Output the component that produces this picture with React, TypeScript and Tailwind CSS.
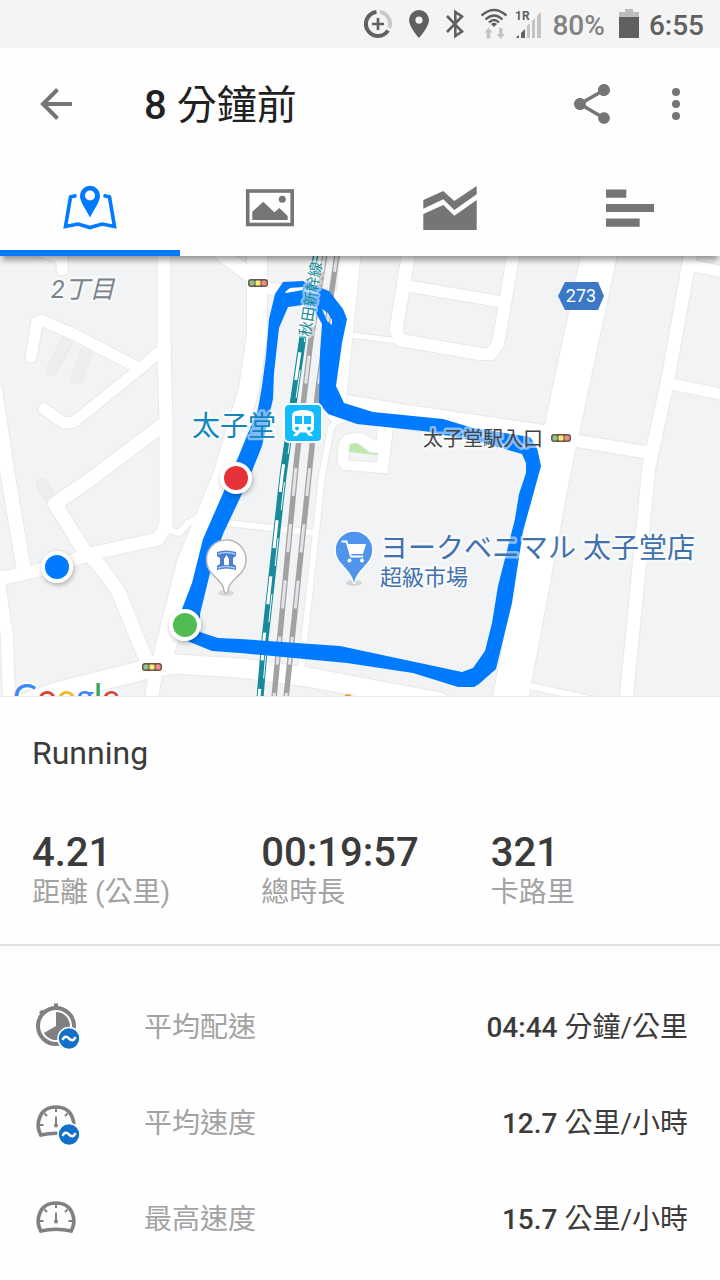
import React, { useState } from 'react';

type Road = { d: string; w: number };

const roads: Road[] = [
  { d: 'M164 -5 L164 92 L166 165 L166 270 L158 283 L90 298 L57 310 L-5 324', w: 13 },
  { d: 'M170 274 L179 277 L188 267 L200 261', w: 6 },
  { d: 'M164 168 L95 220 L55 248 L83 293 L100 310 L118 335 L148 408', w: 14 },
  { d: 'M31 101 L37 66 L41 64 L73 78 L137 111', w: 11 },
  { d: 'M44 153 L64 167 L74 166 L142 111 L166 90', w: 11 },
  { d: 'M-5 134 L8 220 L24 315', w: 14 },
  { d: 'M-2 320 L7 380 L9 450', w: 12 },
  { d: 'M20 449 L60 435 L148 413 L174 408 L240 412 L307 421 L440 446', w: 19 },
  { d: 'M156 415 L151 445', w: 13 },
  { d: 'M62 14 L62 2 L30 -8', w: 11 },
  { d: 'M214 -8 L256 24', w: 14 },
  { d: 'M257 -5 L257 80 L249 133 L223 220 L187 307 L161 410', w: 20 },
  { d: 'M257 31 L345 42', w: 12 },
  { d: 'M351 -5 L335 155', w: 20 },
  { d: 'M345 163 L335 166 L331 172 L322 220 L301 415', w: 6 },
  { d: 'M340 150 L400 160 L550 182', w: 24 },
  { d: 'M560 182 L650 197', w: 12 },
  { d: 'M600 -5 L563 168 L552 220 L510 445', w: 35 },
  { d: 'M691 -5 L667 128 L649 210 L626 445', w: 13 },
  { d: 'M688 9 L725 16', w: 11 },
  { d: 'M667 127 L725 139', w: 11 },
  { d: 'M525 429 L600 445', w: 6 },
  { d: 'M409 -5 L396 74', w: 13 },
  { d: 'M408 30 L502 46', w: 11 },
  { d: 'M514 -5 L498 88 L491 98 L480 98 L400 84 L396 74', w: 12 },
  { d: 'M350 79 L398 85', w: 5 },
  { d: 'M228 267 L316 277', w: 6 },
];

const alleys = ['M68 83 L52 114', 'M88 92 L77 122', 'M42 229 L52 244'];

const routeShape =
  'M182 353 L192 327 L203 283 L224 235 L242 192 L258 153 L262 130 L266 100 L269 63 L275 38 L283 26 L303 25 L329 35 L343 53 L347 63 L342 87 L336 130 L344 147 L373 156 L443 163 L473 172 L530 181 L537 192 L541 210 L530 250 L523 275 L512 347 L496 413 L479 428 L474 431 L458 431 L413 417 L347 407 L240 397 L212 395 L180 382Z ' +
  'M200 358 L210 317 L223 278 L240 242 L252 215 L262 190 L273 143 L274 117 L279 72 L288 51 L303 49 L315 55 L322 68 L320 97 L319 147 L328 158 L357 168 L423 175 L480 186 L522 198 L526 207 L526 217 L519 238 L515 263 L498 330 L492 367 L485 395 L473 412 L462 416 L415 406 L340 390 L240 383 L218 382 L200 376Z ' +
  'M285 36 L290 32 L303 31 L303 34 L286 37Z M322 53 L328 57 L332 64 L332 69 L327 65Z';

const stats = [
  { value: '4.21', label: '距離 (公里)' },
  { value: '00:19:57', label: '總時長' },
  { value: '321', label: '卡路里' },
];

const details = [
  { icon: 'pace', average: true, label: '平均配速', value: '04:44', unit: '分鐘/公里' },
  { icon: 'gauge', average: true, label: '平均速度', value: '12.7', unit: '公里/小時' },
  { icon: 'gauge', average: false, label: '最高速度', value: '15.7', unit: '公里/小時' },
];

const tabs = [
  {
    label: '地圖',
    icon: (
      <>
        <path d="M16.5 11.5 L10.5 13 L5.5 42.5 L18 40 L30 43.5 L42 40 L54.5 42.5 L49.5 13 L43.5 11.5" fill="none" stroke="currentColor" strokeWidth="3.6" />
        <path fillRule="evenodd" d="M30 1.7 A10 10 0 0 0 20 11.7 C20 18 25.5 24.5 30 33.5 C34.5 24.5 40 18 40 11.7 A10 10 0 0 0 30 1.7Z M30 6.5 A5 5 0 1 1 30 16.5 A5 5 0 1 1 30 6.5Z" fill="currentColor" />
      </>
    ),
  },
  {
    label: '相片',
    icon: (
      <>
        <rect x="7.7" y="7" width="44.5" height="33.5" fill="none" stroke="currentColor" strokeWidth="3.6" />
        <circle cx="42.3" cy="15.3" r="3.5" fill="currentColor" />
        <path d="M12.3 27.7 L23.3 17.7 L34.3 28.3 L39.3 24 L47.7 32 V36 H12.3Z" fill="currentColor" />
      </>
    ),
  },
  {
    label: '圖表',
    icon: (
      <path d="M3.3 16 L23.3 7 L34.3 17 L56.7 2 V10.3 L34.3 26 L23.3 15.3 L3.3 24.7Z M3.3 30 L23.3 21 L34.3 31.7 L56.7 16 V46 H3.3Z" fill="currentColor" />
    ),
  },
  {
    label: '分段',
    icon: <path d="M6 5.5 H26.3 V13.7 H6Z M6 20 H54 V28 H6Z M6 34.5 H39.7 V42.7 H6Z" fill="currentColor" />,
  },
];

const StatusBar: React.FC = () => (
  <div className="flex h-12 items-center justify-end bg-[#f4f4f4] pr-4 text-[28px] leading-8 text-[#606060]">
    <div className="flex items-center gap-[17px]">
      <svg width="28" height="30" viewBox="0 0 28 30" fill="none" strokeWidth="4">
        <path d="M12.5 3 A12 12 0 1 0 24 21.5" stroke="#606060" />
        <path d="M16 3 A12 12 0 0 1 25.3 19" stroke="#c9c9c9" />
        <path d="M14 9 V21 M8 15 H20" stroke="#606060" strokeWidth="2.6" />
      </svg>
      <svg width="20" height="30" viewBox="0 0 20 30" fill="currentColor">
        <path fillRule="evenodd" d="M10 1 A10 10 0 0 0 0 11 C0 18 10 29 10 29 C10 29 20 18 20 11 A10 10 0 0 0 10 1Z M10 7.5 A3.6 3.6 0 1 1 10 14.7 A3.6 3.6 0 1 1 10 7.5Z" />
      </svg>
      <svg width="18" height="30" viewBox="0 0 18 30" fill="none" stroke="currentColor" strokeWidth="2.6">
        <path d="M1 7 L16 22.5 L9.3 27 V3 L16 7.5 L1 23" />
      </svg>
    </div>
    <svg className="ml-[17px]" width="26" height="32" viewBox="0 0 26 32">
      <g fill="none" stroke="#606060" strokeWidth="2.4">
        <path d="M0.5 7.5 Q13 -3.5 25.5 7.5" />
        <path d="M4.5 11.5 Q13 3.5 21.5 11.5" />
        <path d="M8 14.5 Q13 9.5 18 14.5" />
      </g>
      <path d="M10 16 Q13 13.500 16 16 L13 19Z" fill="#606060" />
      <path d="M7.5 19.5 L11.5 24.5 H9.3 V30.5 H5.7 V24.5 H3.5Z M18 20 H21.5 V26 H24 L19.7 31 L15.5 26 H18Z" fill="#c4c4c4" />
    </svg>
    <svg className="ml-2" width="27" height="30" viewBox="0 0 27 30">
      <path d="M1 29 V28.5 L4 26 V29Z M6 29 V24 L10 20 V29Z" fill="#606060" />
      <path d="M12 29 V17 L15 14 V29Z M17 29 V12 L20 9 V29Z M22 29 V7 L26 3 V29Z" fill="#c4c4c4" />
      <text x="0" y="11" fontSize="12" fontWeight="700" fill="#606060">1R</text>
    </svg>
    <span className="ml-[10px] pt-1 font-medium text-[#828282]">80%</span>
    <svg className="ml-[14px]" width="20" height="30" viewBox="0 0 20 30">
      <path d="M6 0 H14 V3 H20 V29 H0 V3 H6Z" fill="#bdbdbd" />
      <path d="M0 8 H20 V29 H0Z" fill="#606060" />
    </svg>
    <span className="ml-[10px] pt-1 font-medium">6:55</span>
  </div>
);

const TrafficLight: React.FC<{ x: number; y: number }> = ({ x, y }) => (
  <g transform={`translate(${x} ${y})`}>
    <rect width="20" height="8" rx="3" fill="#6a5844" />
    <rect x="1.5" y="1.5" width="5" height="5" rx="1.5" fill="#8cc38f" />
    <rect x="7.5" y="1.5" width="5" height="5" rx="1" fill="#fbe974" />
    <rect x="13.5" y="1.5" width="5" height="5" rx="1.5" fill="#f08d89" />
  </g>
);

const Marker: React.FC<{ x: number; y: number; color: string }> = ({ x, y, color }) => (
  <g>
    <circle cx={x} cy={y} r="16" fill="#fff" filter="url(#marker-shadow)" />
    <circle cx={x} cy={y} r="12" fill={color} />
  </g>
);

const RouteMap: React.FC = () => (
  <svg
    className="block w-full bg-[#f1f3f4] [font-family:Roboto,'Noto_Sans_CJK_JP',sans-serif]"
    viewBox="0 0 720 440"
    role="img"
    aria-label="Running route"
  >
    <defs>
      <filter id="marker-shadow" x="-50%" y="-50%" width="200%" height="200%">
        <feDropShadow dx="1" dy="2" stdDeviation="2.5" floodOpacity="0.3" />
      </filter>
    </defs>
    <g fill="none" strokeLinejoin="round" strokeLinecap="round">
      {alleys.map((d) => (
        <path key={d} d={d} stroke="#e4e4e4" strokeWidth="12" />
      ))}
      {alleys.map((d) => (
        <path key={d} d={d} stroke="#eeeeee" strokeWidth="11" />
      ))}
      {roads.map((road) => (
        <path key={road.d} d={road.d} stroke="#e8e9ea" strokeWidth={road.w + 2} />
      ))}
      {roads.map((road) => (
        <path key={road.d} d={road.d} stroke="#ffffff" strokeWidth={road.w} />
      ))}
    </g>

    {/* park */}
    <path
      fillRule="evenodd"
      d="M345 178 L360 176 L376 184 L378 165 L394 167 L388 218 L342 214 L337 205 L338 188Z M350 188 L357 187 L370 196 L378 198 L377 206 L349 204Z"
      fill="#fff"
      stroke="#e8e9ea"
    />
    <path d="M350 188 L357 187 L370 197 L378 197 L377 199 L349 196Z" fill="#bfe8ac" />

    {/* railway tracks */}
    <g fill="none">
      <path d="M325 -2 L311 83 L297 200 L274 442" stroke="#a2a2a2" strokeWidth="5.5" />
      <path d="M325 -2 L311 83 L297 200 L274 442" stroke="#e3e4e8" strokeWidth="3" strokeDasharray="28 28.5" strokeDashoffset="10" />
      <path d="M337 -2 L318 133 L311 200 L286 442" stroke="#a2a2a2" strokeWidth="5.5" />
      <path d="M337 -2 L318 133 L311 200 L286 442" stroke="#e3e4e8" strokeWidth="3" strokeDasharray="28 28.5" strokeDashoffset="10" />
      <path d="M314 -2 L312 8 M318 -2 L316 8" stroke="#178b9b" strokeWidth="1.5" />
      <path d="M303 80 L291 163 L283 220 L265 383 L260 442" stroke="#178b9b" strokeWidth="7" />
      <path d="M302 82 L290 163 L282 220 L264 383 L259 442" stroke="#ffffff" strokeWidth="3" strokeDasharray="28 28.5" strokeDashoffset="42" />
      <path d="M305 82 L293 163 L285 220 L267 383 L262 442" stroke="#ffffff" strokeWidth="1" strokeDasharray="28 28.5" strokeDashoffset="24" />
    </g>

    <path d={routeShape} fill="#007aff" fillRule="evenodd" />

    <TrafficLight x={248} y={23} />
    <TrafficLight x={551} y={178} />
    <TrafficLight x={142} y={407} />

    <path d="M558 40 L565 26 H598 L604 40 L598 54 H565Z" fill="#3b78c5" />
    <text x="581" y="46" textAnchor="middle" fontSize="18" fill="#fff">273</text>

    <g strokeLinejoin="round" strokeWidth="5" stroke="#fff" strokeOpacity="0.5" style={{ paintOrder: 'stroke' }}>
      <text x="51" y="42" fontSize="25" fontStyle="italic" fill="#7a828c">2丁目</text>
      <text x="192" y="180" fontSize="28" fill="#1286ba">太子堂</text>
      <text x="423" y="190" fontSize="20" fill="#444444">太子堂駅入口</text>
      <text x="380" y="302" fontSize="28" fill="#4172ad">ヨークベニマル 太子堂店</text>
      <text x="380" y="329" fontSize="22" fill="#4172ad">超級市場</text>
      <text transform="translate(310 81) rotate(-81)" fontSize="15" fill="#178b9b">秋田新幹線</text>
    </g>

    {/* station */}
    <g transform="translate(284 148)">
      <rect x="-1" y="-1" width="40" height="40" rx="6" fill="#fff" />
      <rect x="1" y="1" width="36" height="36" rx="4" fill="#13bbff" />
      <path fillRule="evenodd" d="M12 7 Q19 5 26 7 Q30 8 30 12 V24 Q30 28 26 28 L29 32 H25 L22 28.5 H16 L13 32 H9 L12 28 Q8 28 8 24 V12 Q8 8 12 7Z M11 12 H18 V20 H11Z M20 12 H27 V20 H20Z M13 22.5 A2 2 0 1 0 13 26.5 A2 2 0 1 0 13 22.5Z M25 22.5 A2 2 0 1 0 25 26.5 A2 2 0 1 0 25 22.5Z" fill="#fff" />
    </g>

    {/* hall */}
    <ellipse cx="226" cy="337" rx="8" ry="3" fill="#000" opacity="0.1" />
    <path d="M226 284 A19.5 19.5 0 0 0 206.5 304 C206.5 320 223 322 224 335 Q226 340 228 335 C229 322 246 320 246 304 A19.5 19.5 0 0 0 226 284Z" fill="#fff" stroke="#b5b7b9" strokeWidth="1.5" />
    <path d="M217 296 Q226 293 236 296 V300 L233 302 V308 L236 310 V314 Q226 311 217 314 V310 L220 308 V302 L217 300Z" fill="#4a7fd0" />
    <path d="M218 298 Q226 295 235 298 M218 312 Q226 309 235 312" stroke="#b3cdf3" strokeWidth="1.5" fill="none" />
    <path d="M224 309 V303 L226.5 299 L229 303 V309Z" fill="#fff" />

    {/* supermarket */}
    <ellipse cx="354" cy="327" rx="8" ry="3" fill="#000" opacity="0.12" />
    <path d="M354 275 A19 19 0 0 0 335 294 C335 309 350 312 353 326 Q354 329 355 326 C358 312 373 309 373 294 A19 19 0 0 0 354 275Z" fill="#5094ee" stroke="#fff" strokeWidth="1.5" />
    <g fill="#fff">
      <path d="M347 288 H366 L363 298 H350Z" />
      <circle cx="349.5" cy="304.5" r="2" />
      <circle cx="362" cy="304.5" r="2" />
    </g>
    <path d="M341.5 285.5 H346.5 L351 300.5 H363" fill="none" stroke="#fff" strokeWidth="1.8" />

    <Marker x={57} y={311} color="#007aff" />
    <Marker x={236} y={222} color="#e53238" />
    <Marker x={185} y={369} color="#52bb52" />

    <circle cx="348" cy="442" r="4" fill="#f29a3c" />
    <text x="13" y="453" fontSize="34" fontWeight="500" className="[font-family:Lato,sans-serif]" stroke="#fff" strokeWidth="4" strokeOpacity="0.7" style={{ paintOrder: 'stroke' }}>
      <tspan fill="#4285f4">G</tspan>
      <tspan fill="#d9473b">o</tspan>
      <tspan fill="#eebb26">o</tspan>
      <tspan fill="#4285f4">g</tspan>
      <tspan fill="#38a55a">l</tspan>
      <tspan fill="#d9473b">e</tspan>
    </text>
  </svg>
);

const DetailIcon: React.FC<{ icon: string; average: boolean }> = ({ icon, average }) => (
  <svg width="48" height="48" viewBox="0 0 48 48" fill="none" stroke="#808080">
    {icon === 'pace' ? (
      <>
        <circle cx="24" cy="24" r="18" strokeWidth="4" />
        <path d="M24 1.5 V6" strokeWidth="4" />
        <path d="M8 11.5 L11 8.5" strokeWidth="3" />
        <path d="M24 24 V10 A14 14 0 1 1 11.9 31Z" fill="#808080" stroke="none" />
      </>
    ) : (
      <>
        <path d="M8.8 37 C3.5 27.5 6 9 24 9 C42 9 44.5 27.5 39.2 37 Q24 33.5 8.8 37Z" strokeWidth="3.6" />
        <path d="M24 10 V14 M7 27 H11.5 M36.5 27 H41 M12.5 15.5 L15 18 M35.5 15.5 L33 18" strokeWidth="2" />
        <path d="M24 18.5 V27" strokeWidth="2" />
        <circle cx="24" cy="27.5" r="2" fill="#808080" stroke="none" />
      </>
    )}
    {average && (
      <>
        <circle cx="37" cy="36.5" r="11" fill="#1270cb" stroke="#fff" strokeWidth="1.6" />
        <path d="M30.5 38 C32.5 33.5 35 34.5 37 36.5 C39 38.5 41.5 39.5 43.5 35" stroke="#fff" strokeWidth="2.6" />
      </>
    )}
  </svg>
);

const App: React.FC = () => {
  const [active, setActive] = useState(0);

  return (
    <div className="min-h-screen bg-[#fefefe] text-[#3b3b3b] [font-family:Roboto,'Noto_Sans_CJK_TC',sans-serif]">
      <StatusBar />

      <header className="relative z-10 bg-[#fefefe] shadow-[0_6px_6px_-2px_rgba(0,0,0,0.4)]">
        <div className="flex h-28 items-center pr-5 pl-8 text-[#757575]">
          <button type="button" aria-label="Back">
            <svg width="48" height="48" viewBox="0 0 48 48" fill="none" stroke="currentColor" strokeWidth="4">
              <path d="M40 24 H11 M25.5 9.5 L11 24 L25.5 38.5" />
            </svg>
          </button>
          <h1 className="ml-16 flex-1 pt-1 text-[40px] leading-[48px] text-[#212121]">
            <span className="font-medium">8</span> 分鐘前
          </h1>
          <button type="button" aria-label="Share">
            <svg width="48" height="48" viewBox="0 0 24 24" fill="currentColor">
              <path d="M18 16.08c-.76 0-1.44.3-1.96.77L8.91 12.7c.05-.23.09-.46.09-.7s-.04-.47-.09-.7l7.05-4.11c.54.5 1.25.81 2.04.81 1.66 0 3-1.34 3-3s-1.34-3-3-3-3 1.34-3 3c0 .24.04.47.09.7L8.04 9.81C7.5 9.31 6.79 9 6 9c-1.66 0-3 1.34-3 3s1.34 3 3 3c.79 0 1.5-.31 2.04-.81l7.12 4.16c-.05.21-.08.43-.08.65 0 1.61 1.31 2.92 2.92 2.92s2.92-1.31 2.92-2.92-1.31-2.92-2.92-2.92z" />
            </svg>
          </button>
          <button type="button" aria-label="More" className="ml-9">
            <svg width="48" height="48" viewBox="0 0 24 24" fill="currentColor">
              <circle cx="12" cy="6" r="2" />
              <circle cx="12" cy="12" r="2" />
              <circle cx="12" cy="18" r="2" />
            </svg>
          </button>
        </div>

        <div role="tablist" className="grid grid-cols-4">
          {tabs.map((tab, i) => (
            <button
              key={tab.label}
              type="button"
              role="tab"
              aria-label={tab.label}
              aria-selected={active === i}
              onClick={() => setActive(i)}
              className={`flex h-24 items-center justify-center border-y-6 border-t-transparent ${
                active === i ? 'border-b-[#007aff] text-[#007aff]' : 'border-b-transparent text-[#757575]'
              }`}
            >
              <svg width="60" height="48" viewBox="0 0 60 48">{tab.icon}</svg>
            </button>
          ))}
        </div>
      </header>

      <RouteMap />

      <main className="border-t border-[#ececec]">
        <section className="border-b-2 border-[#e0e0e0] pt-9 pb-[31px] pl-8">
          <h2 className="text-[32px] leading-10">Running</h2>
          <dl className="mt-15 grid grid-cols-3">
            {stats.map((stat) => (
              <div key={stat.label} className="flex flex-col-reverse">
                <dt className="text-[28px] leading-10 text-[#a3a3a3]">{stat.label}</dt>
                <dd className="text-[40px] leading-10 font-medium">{stat.value}</dd>
              </div>
            ))}
          </dl>
        </section>

        <dl className="pt-8 text-[28px] leading-8">
          {details.map((row) => (
            <div key={row.label} className="flex h-24 items-center px-8">
              <DetailIcon icon={row.icon} average={row.average} />
              <dt className="ml-16 flex-1 pt-1 text-[#a3a3a3]">{row.label}</dt>
              <dd className="pt-1">
                <span className="font-medium">{row.value}</span> {row.unit}
              </dd>
            </div>
          ))}
        </dl>
      </main>
    </div>
  );
};

export default App;
